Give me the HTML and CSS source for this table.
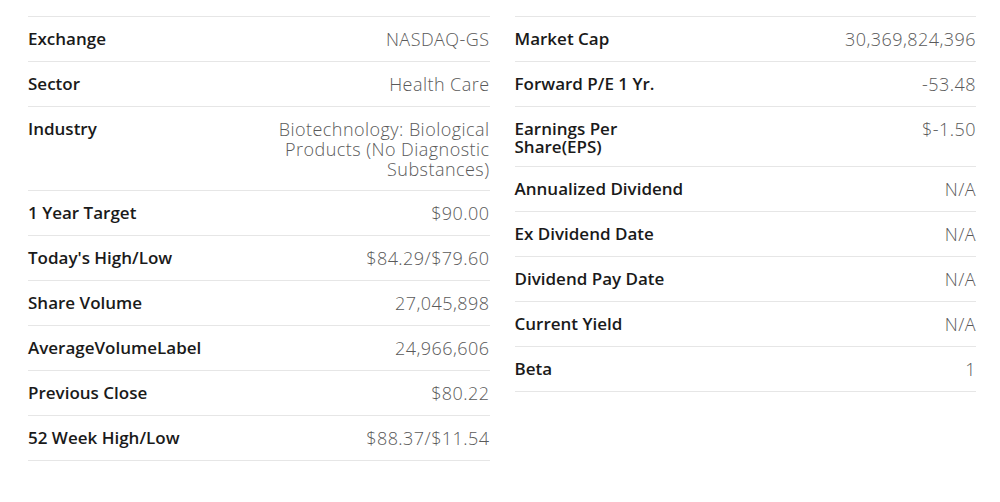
FILE: index.html
```html
<!DOCTYPE html>
<html>
<head>
<meta charset="utf-8">
<link rel="stylesheet" href="styles.css">
</head>
<body>
<div class="summary">
  <div class="col">
    <div class="row"><div class="label">Exchange</div><div class="value">NASDAQ-GS</div></div>
    <div class="row"><div class="label">Sector</div><div class="value">Health Care</div></div>
    <div class="row"><div class="label">Industry</div><div class="value">Biotechnology: Biological Products (No Diagnostic Substances)</div></div>
    <div class="row"><div class="label">1 Year Target</div><div class="value">$90.00</div></div>
    <div class="row"><div class="label">Today's High/Low</div><div class="value">$84.29/$79.60</div></div>
    <div class="row"><div class="label">Share Volume</div><div class="value">27,045,898</div></div>
    <div class="row"><div class="label">AverageVolumeLabel</div><div class="value">24,966,606</div></div>
    <div class="row"><div class="label">Previous Close</div><div class="value">$80.22</div></div>
    <div class="row"><div class="label">52 Week High/Low</div><div class="value">$88.37/$11.54</div></div>
  </div>
  <div class="col">
    <div class="row"><div class="label">Market Cap</div><div class="value">30,369,824,396</div></div>
    <div class="row"><div class="label">Forward P/E 1 Yr.</div><div class="value">-53.48</div></div>
    <div class="row"><div class="label">Earnings Per Share(EPS)</div><div class="value">$-1.50</div></div>
    <div class="row"><div class="label">Annualized Dividend</div><div class="value">N/A</div></div>
    <div class="row"><div class="label">Ex Dividend Date</div><div class="value">N/A</div></div>
    <div class="row"><div class="label">Dividend Pay Date</div><div class="value">N/A</div></div>
    <div class="row"><div class="label">Current Yield</div><div class="value">N/A</div></div>
    <div class="row"><div class="label">Beta</div><div class="value">1</div></div>
  </div>
</div>
</body>
</html>
```

FILE: styles.css
```css
html, body {
  margin: 0;
  padding: 0;
  background: #ffffff;
}

body {
  font-family: "Open Sans", "Lato", "Liberation Sans", sans-serif;
  color: #1a1a1a;
}

.summary {
  display: flex;
  gap: 25px;
  padding: 16px 24px 0 28px;
  align-items: flex-start;
}

.col {
  flex: 1 1 0;
  border-top: 1px solid #e6e6e6;
}

.row {
  box-sizing: border-box;
  min-height: 45px;
  display: flex;
  justify-content: space-between;
  align-items: flex-start;
  padding: 12px 0 11px;
  border-bottom: 1px solid #e6e6e6;
}

.label {
  font-size: 17px;
  font-weight: 600;
  line-height: 17.5px;
  padding-top: 1px;
  color: #1a1a1a;
  max-width: 188px;
}

.value {
  font-size: 18px;
  font-weight: 300;
  line-height: 20px;
  letter-spacing: 0.45px;
  color: #5a5a5a;
  text-align: right;
  max-width: 224px;
}
```
